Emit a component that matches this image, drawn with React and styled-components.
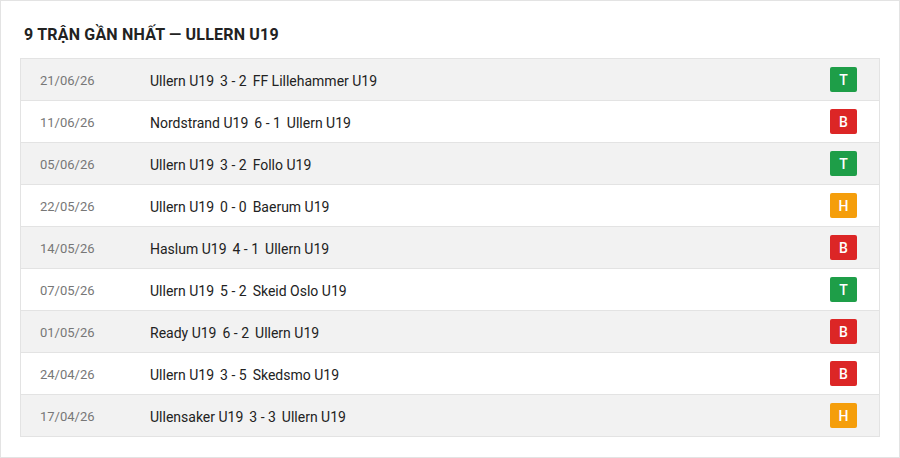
import styled, { createGlobalStyle } from "styled-components";

const Global = createGlobalStyle`
  html, body { margin: 0; padding: 0; background: #ffffff; }
  body { font-family: Roboto, "Noto Sans", Arial, sans-serif; }
`;

const Card = styled.div`
  box-sizing: border-box;
  width: 900px;
  height: 458px;
  border: 1px solid #e3e3e3;
  background: #ffffff;
  padding: 0 19px;
`;

const Title = styled.h2`
  margin: 0;
  padding: 24px 0 0 4px;
  height: 33px;
  font-size: 16px;
  font-weight: 700;
  letter-spacing: 0.2px;
  color: #222222;
  line-height: 20px;
`;

const Table = styled.div`
  border: 1px solid #e3e3e3;
  border-bottom: none;
`;

const Row = styled.div`
  display: grid;
  grid-template-columns: 110px 1fr 50px;
  align-items: center;
  box-sizing: border-box;
  height: 42px;
  padding: 2px 0 0 19px;
  border-bottom: 1px solid #e3e3e3;
  background: ${(p) => (p.$alt ? "#f2f2f2" : "#ffffff")};
`;

const DateCell = styled.span`
  font-size: 13px;
  color: #777777;
`;

const Match = styled.span`
  font-size: 14px;
  color: #222222;
`;

const Score = styled.span`
  margin: 0 6px;
`;

const colors = { T: "#1e9e48", B: "#dc2626", H: "#f59e0b" };

const Badge = styled.span`
  justify-self: start;
  width: 27px;
  height: 25px;
  margin-top: -2px;
  margin-left: 1px;
  display: flex;
  align-items: center;
  justify-content: center;
  border-radius: 2px;
  background: ${(p) => colors[p.$r]};
  color: #ffffff;
  font-size: 14px;
  font-weight: 500;
`;

const matches = [
  ["21/06/26", "Ullern U19", "3 - 2", "FF Lillehammer U19", "T"],
  ["11/06/26", "Nordstrand U19", "6 - 1", "Ullern U19", "B"],
  ["05/06/26", "Ullern U19", "3 - 2", "Follo U19", "T"],
  ["22/05/26", "Ullern U19", "0 - 0", "Baerum U19", "H"],
  ["14/05/26", "Haslum U19", "4 - 1", "Ullern U19", "B"],
  ["07/05/26", "Ullern U19", "5 - 2", "Skeid Oslo U19", "T"],
  ["01/05/26", "Ready U19", "6 - 2", "Ullern U19", "B"],
  ["24/04/26", "Ullern U19", "3 - 5", "Skedsmo U19", "B"],
  ["17/04/26", "Ullensaker U19", "3 - 3", "Ullern U19", "H"],
];

const App = () => {
  return (
    <>
      <Global />
      <Card>
        <Title>9 TRẬN GẦN NHẤT — ULLERN U19</Title>
        <Table>
          {matches.map(([d, home, score, away, r], i) => (
            <Row key={i} $alt={i % 2 === 0}>
              <DateCell>{d}</DateCell>
              <Match>
                {home}
                <Score>{score}</Score>
                {away}
              </Match>
              <Badge $r={r}>{r}</Badge>
            </Row>
          ))}
        </Table>
      </Card>
    </>
  );
};

export default App;
